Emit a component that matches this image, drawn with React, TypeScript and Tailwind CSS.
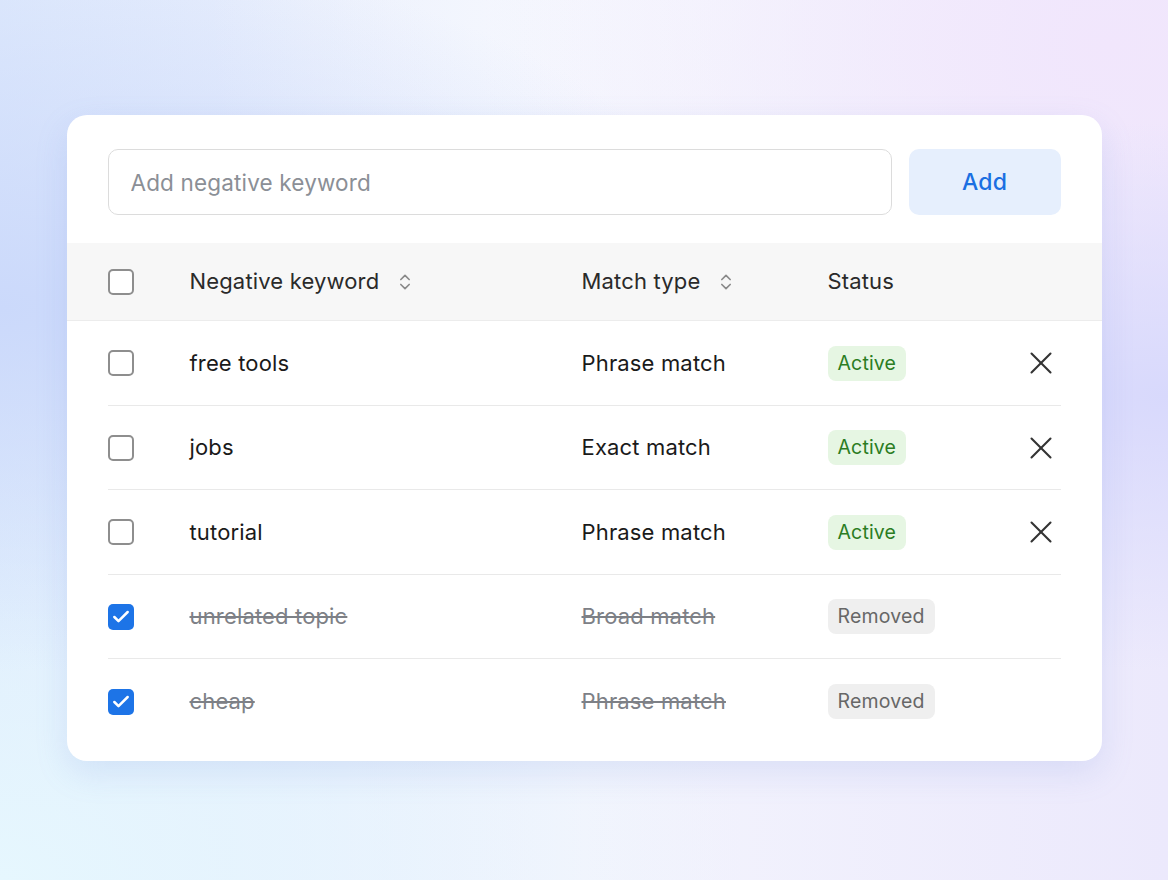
import { ChevronsUpDown, X, Check } from 'lucide-react'

type Row = {
  keyword: string
  match: string
  removed: boolean
}

const rows: Row[] = [
  { keyword: 'free tools', match: 'Phrase match', removed: false },
  { keyword: 'jobs', match: 'Exact match', removed: false },
  { keyword: 'tutorial', match: 'Phrase match', removed: false },
  { keyword: 'unrelated topic', match: 'Broad match', removed: true },
  { keyword: 'cheap', match: 'Phrase match', removed: true },
]

function Checkbox({ checked }: { checked: boolean }) {
  if (checked) {
    return (
      <span className="flex h-[26px] w-[26px] items-center justify-center rounded-[5px] bg-[#1d74e7]">
        <Check size={20} strokeWidth={3} className="text-white" />
      </span>
    )
  }
  return <span className="block h-[26px] w-[26px] rounded-[5px] border-2 border-[#8e8e8e] bg-white" />
}

export default function App() {
  return (
    <div className="min-h-[880px] w-full bg-[radial-gradient(ellipse_at_0%_35%,#cbd9fb_0%,transparent_45%),radial-gradient(ellipse_at_100%_45%,#d8d9fc_0%,transparent_40%),radial-gradient(ellipse_at_95%_5%,#f1e6fc_0%,transparent_40%),radial-gradient(ellipse_at_0%_100%,#e6f7fe_0%,transparent_45%),radial-gradient(ellipse_at_60%_0%,#f6f9fe_0%,transparent_50%),linear-gradient(90deg,#dde8fc,#f3f4fd_50%,#ece9fc)] pt-[115px] font-['Inter','Noto_Sans',sans-serif] tracking-[0.01em]">
      <div className="mx-auto w-[1035px] overflow-hidden rounded-[20px] bg-white pb-[17px] shadow-[0_12px_32px_rgba(120,150,220,0.18)]">
        {/* Add keyword bar */}
        <div className="flex gap-[17px] px-[41px] pt-[34px]">
          <input
            type="text"
            placeholder="Add negative keyword"
            className="h-[66px] flex-1 rounded-[10px] border border-[#dcdcdc] px-[22px] text-[22.5px] text-[#1a1a1a] outline-none placeholder:text-[#8b8f96]"
          />
          <button className="h-[66px] w-[152px] rounded-[10px] bg-[#e6effd] text-[23px] font-medium text-[#1b6fe2]">
            Add
          </button>
        </div>

        {/* Table header */}
        <div className="mt-[28px] flex h-[78px] items-center border-b border-[#ececec] bg-[#f7f7f7] px-[41px] text-[22px] text-[#2a2a2a]">
          <div className="w-[82px]">
            <Checkbox checked={false} />
          </div>
          <div className="flex w-[392px] items-center gap-[16px]">
            <span>Negative keyword</span>
            <ChevronsUpDown size={20} strokeWidth={2} className="text-[#8a8a8a]" />
          </div>
          <div className="flex w-[246px] items-center gap-[16px]">
            <span>Match type</span>
            <ChevronsUpDown size={20} strokeWidth={2} className="text-[#8a8a8a]" />
          </div>
          <div>Status</div>
        </div>

        {/* Keyword rows */}
        <div className="px-[41px]">
          {rows.map((row, i) => (
            <div
              key={row.keyword}
              className={`flex h-[84.5px] items-center pt-[1px] text-[22px] ${i < rows.length - 1 ? 'border-b border-[#e9e9e9]' : ''}`}
            >
              <div className="w-[82px]">
                <Checkbox checked={row.removed} />
              </div>
              <div className={`w-[392px] ${row.removed ? 'text-[#7d8086] line-through' : 'text-[#1a1a1a]'}`}>
                {row.keyword}
              </div>
              <div className={`w-[246px] ${row.removed ? 'text-[#7d8086] line-through' : 'text-[#1a1a1a]'}`}>
                {row.match}
              </div>
              <div className="flex-1">
                {row.removed ? (
                  <span className="inline-flex h-[35px] items-center rounded-[8px] bg-[#efefef] px-[10px] text-[19.5px] text-[#676767]">
                    Removed
                  </span>
                ) : (
                  <span className="inline-flex h-[35px] items-center rounded-[8px] bg-[#e6f6e3] px-[10px] text-[19.5px] text-[#2b7d23]">
                    Active
                  </span>
                )}
              </div>
              {!row.removed && (
                <button className="flex h-[40px] w-[40px] items-center justify-center text-[#333]">
                  <X size={38} strokeWidth={1.3} />
                </button>
              )}
            </div>
          ))}
        </div>
      </div>
    </div>
  )
}
